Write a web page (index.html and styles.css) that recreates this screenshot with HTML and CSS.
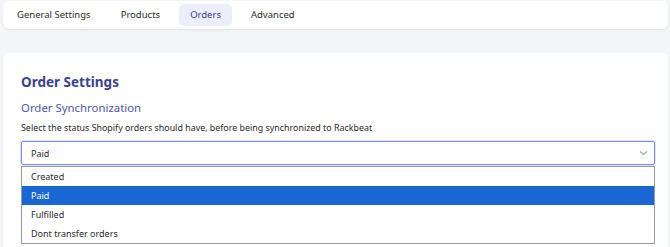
FILE: index.html
```html
<!DOCTYPE html>
<html lang="en">
<head>
    <meta charset="UTF-8">
    <meta name="viewport" content="width=device-width, initial-scale=1.0">
    <title>Order Settings | Rackbeat</title>
    <link rel="stylesheet" href="styles.css">
</head>
<body>
    <nav class="tab-bar">
        <a class="tab">General Settings</a>
        <a class="tab">Products</a>
        <a class="tab active">Orders</a>
        <a class="tab">Advanced</a>
    </nav>

    <div class="card">
        <h1>Order Settings</h1>
        <h2>Order Synchronization</h2>
        <p class="hint">Select the status Shopify orders should have, before being synchronized to Rackbeat</p>

        <div class="select-wrap">
            <div class="select">
                <span>Paid</span>
                <svg class="chevron" width="9" height="6" viewBox="0 0 9 6">
                    <path d="M1 1.5 L4.5 4.5 L8 1.5" fill="none" stroke="#9aa3b5" stroke-width="1.2"/>
                </svg>
            </div>
            <ul class="options">
                <li>Created</li>
                <li class="selected">Paid</li>
                <li>Fulfilled</li>
                <li>Dont transfer orders</li>
            </ul>
        </div>
    </div>
</body>
</html>
```

FILE: styles.css
```css
:root {
    --page-bg: #f4f5f9;
    --indigo: #3b3f96;
    --indigo-light: #5057aa;
    --tab-active: #eceefb;
}

body {
    margin: 0;
    padding: 1px 2px 0 3px;
    background: var(--page-bg);
    font-family: 'Noto Sans', 'Open Sans', sans-serif;
    color: #2b2b2b;
}

.tab-bar {
    display: flex;
    align-items: center;
    height: 28px;
    padding: 0 4px 0 3px;
    background: white;
    border-radius: 6px;
    box-shadow: 0 1px 2px rgba(0, 0, 0, 0.08);
}

.tab {
    font-size: 9.5px;
    padding: 5px 11px;
    border-radius: 5px;
    margin-right: 8px;
    color: #2b2b2b;
    line-height: 12px;
}

.tab.active {
    background: var(--tab-active);
    color: var(--indigo);
}

.card {
    margin-top: 24px;
    background: white;
    border-radius: 6px 6px 0 0;
    padding: 19px 13px 40px 18px;
    min-height: 200px;
}

h1 {
    margin: 0;
    font-size: 13.5px;
    font-weight: 700;
    color: var(--indigo);
    line-height: 20px;
}

h2 {
    margin: 8px 0 0;
    font-size: 11.4px;
    font-weight: 400;
    color: var(--indigo-light);
    line-height: 16px;
}

.hint {
    margin: 5px 0 0;
    font-size: 8.9px;
    line-height: 13px;
}

.select-wrap {
    position: relative;
    margin-top: 7px;
}

.select {
    display: flex;
    align-items: center;
    justify-content: space-between;
    height: 22px;
    padding: 0 6px 0 9px;
    border: 1px solid #7d8cf0;
    border-radius: 2px;
    box-shadow: 0 0 0 1px #dfe4fd;
    font-size: 9px;
}

.options {
    position: absolute;
    left: 0;
    right: 0;
    top: 25px;
    margin: 0;
    padding: 0;
    list-style: none;
    background: white;
    border: 1px solid #9a9a9a;
    font-size: 9px;
}

.options li {
    height: 19px;
    line-height: 19px;
    padding-left: 9px;
}

.options li.selected {
    background: #1a66d2;
    color: white;
}
```
